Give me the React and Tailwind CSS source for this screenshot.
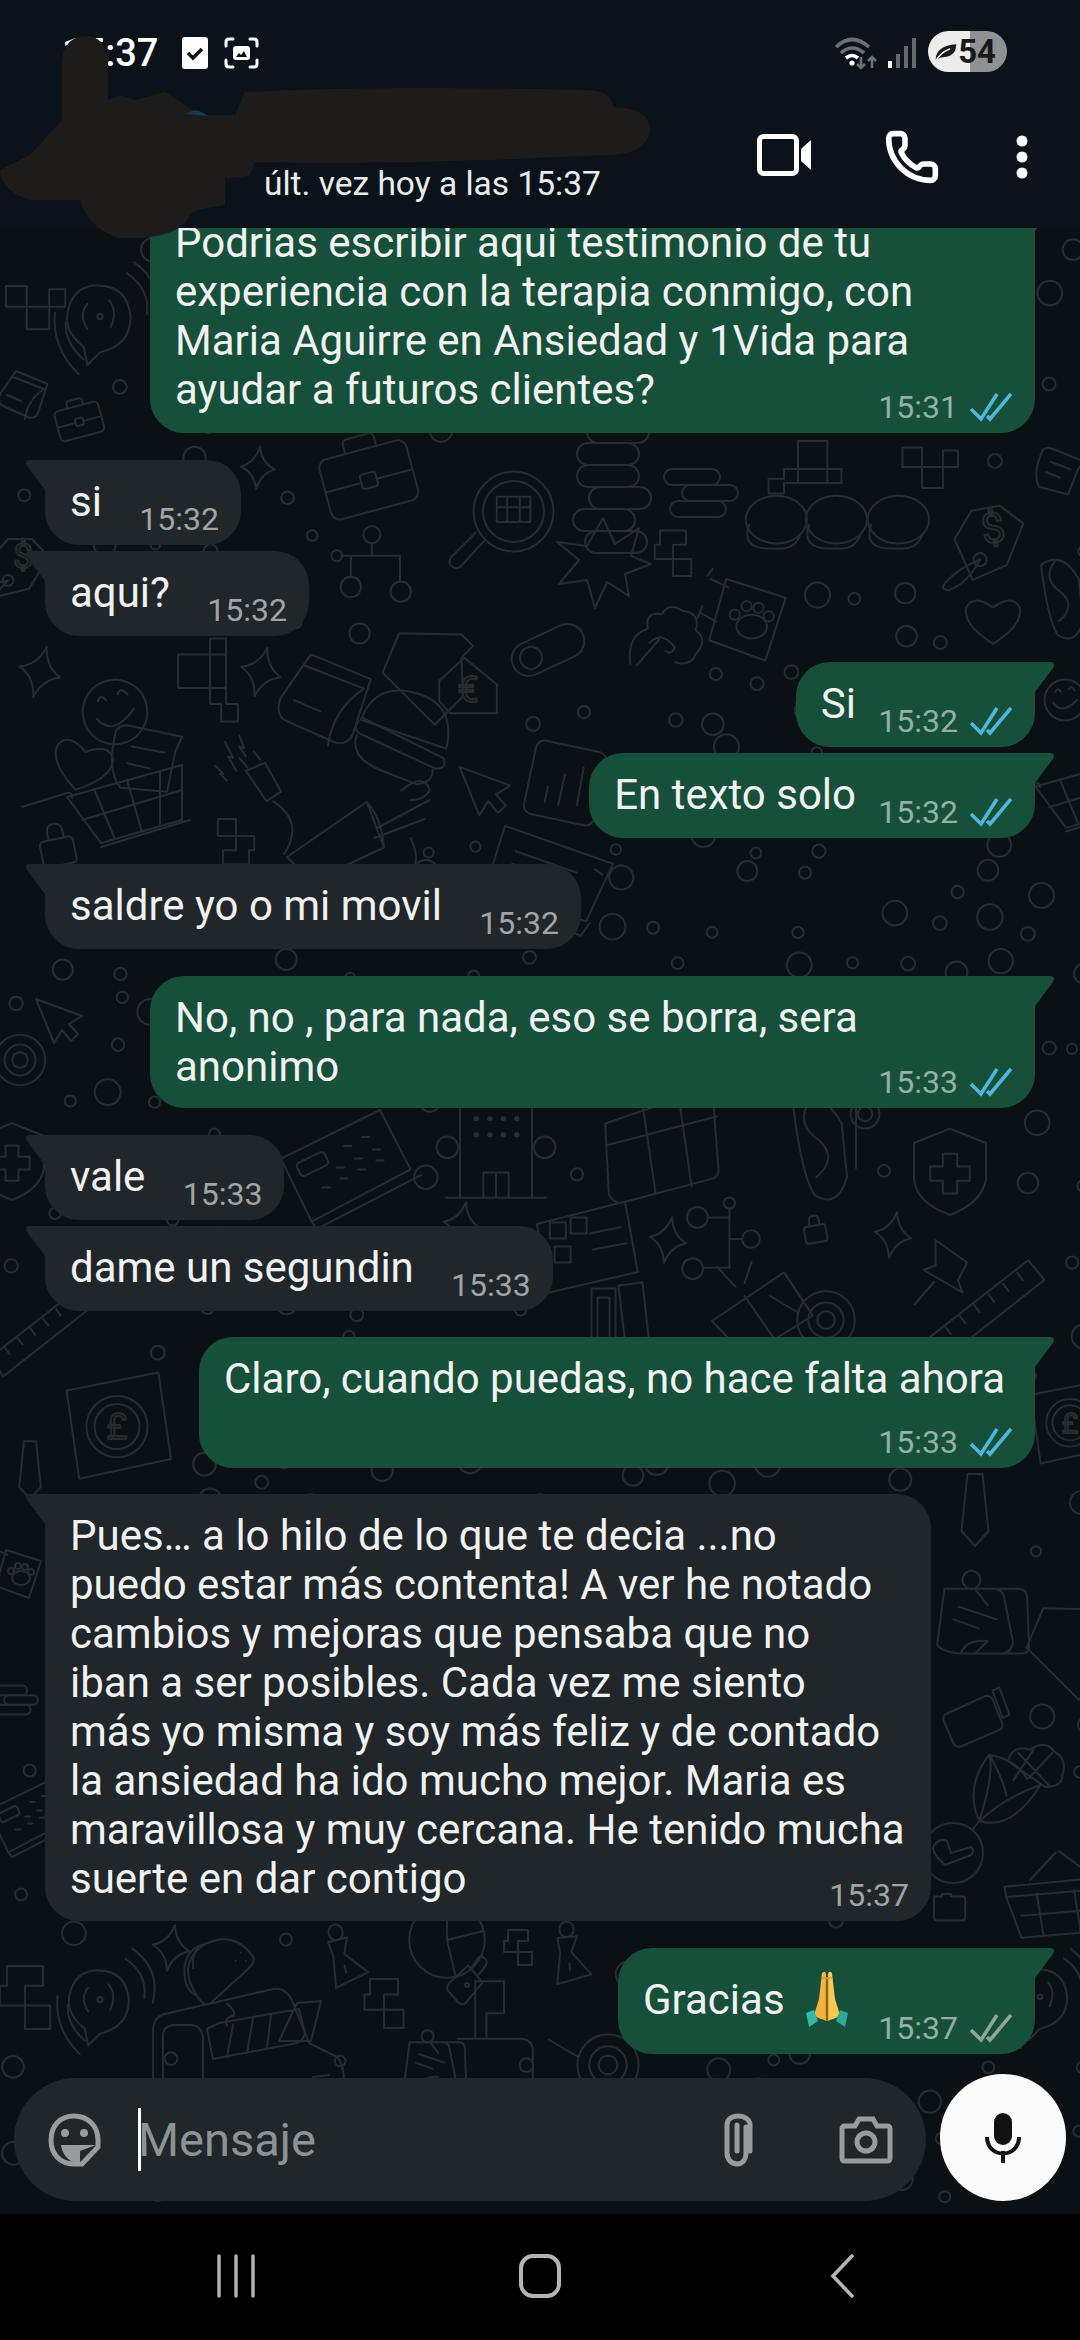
import { Phone } from 'lucide-react'

// Wallpaper doodles, each drawn around (0,0) in a box of about 100 units
const SHAPES = {
  briefcase: <><rect x="-45" y="-28" width="90" height="62" rx="9" /><path d="M-16 -28v-9q0-5 5-5h22q5 0 5 5v9M-45 4H-8M8 4H45" /><rect x="-8" y="-4" width="16" height="15" rx="3" /></>,
  star: <path d="M0-42Q7-10 34 0Q7 10 0 42Q-7 10-34 0Q-7-10 0-42Z" />,
  magnifier: <><circle cx="10" cy="-10" r="38" /><circle cx="10" cy="-10" r="29" /><path d="M-18 18L-40 42q-5 4-9 0t0-9L-26 10" /><path d="M-6-24h32v24h-32zM-6-14h32M4-24v24M16-24v24" /></>,
  circuit: <><circle cx="5" cy="-35" r="11" /><circle cx="-40" cy="-8" r="7" /><circle cx="-22" cy="32" r="13" /><circle cx="42" cy="38" r="13" /><path d="M5-24V-8h36v32M-33-8H5M-22-8V19" /></>,
  tagEuro: <><path d="M-40-10L-5-42 40-5V35H-25L-40 18Z" /><text x="0" y="20" fontSize="52" textAnchor="middle">€</text></>,
  tagDollar: <><path d="M-20-35L20-35 48-5 15 48-35 60-50 0Z" /><circle cx="-20" cy="34" r="9" /><path d="M-20 34Q-50 40-70 55Q-85 65-70 68Q-45 65-20 34" /><text x="5" y="14" fontSize="58" textAnchor="middle">$</text></>,
  pill: <><rect x="-45" y="-20" width="90" height="40" rx="20" /><circle cx="-22" cy="0" r="13" /></>,
  bag: <><path d="M-18-48L45-22 28 30Q24 48 8 45L-44 22Q-56 16-50-2L-18-48ZM-24-36L38-12M38-12Q5 10 0 48M-36 0L-8 12" /></>,
  burger: <><path d="M-44-2Q-40-42 2-42Q44-42 46 4Z" /><path d="M-46 0Q-50 10-40 12L40 26Q52 24 46 14L-42-4M-44 14Q-46 38-10 42L26 46Q42 40 38 28" /></>,
  smile: <><circle r="34" /><path d="M-20 4Q-6 26 20 0M-16-14Q-12-22-7-14M6-18Q10-26 16-16" /></>,
  heart: <path d="M0 34Q-44 6-38-18Q-28-38 0-18Q28-38 38-18Q44 6 0 34Z" />,
  receipt: <><path d="M-40-30Q-35-40-22-38L45-30 38-10 32 42-28 42Q-48 22-40-30ZM-18-12L24-8M-22 10L8 14" /></>,
  cart: <path d="M-100-5L-55-19Q-50-20-50-14M-55-15L60-47V8L-21 31ZM-21 35L68 8M-28-23L-8 25M5-32L20 20M38-40V12M-40 8L60-22" />,
  plug: <><path d="M-14-14L10-24 30 12 12 24ZM-12-18L-22-30M4-28L-4-38M20 24Q60 50 34 90" /><path d="M-40-50L-30-30-36-32-26-14M-22-58L-16-42-22-44-14-32M-52-20L-42-10-46-10-38-2" /></>,
  lock: <><rect x="-24" y="-10" width="48" height="38" rx="6" /><path d="M-10-10v-10q0-12 11-12t11 12v10" /></>,
  cursor: <path d="M-48-42L44-8 18 8 36 28 22 42 4 20-12 46Z" />,
  megaphone: <><path d="M-60 20L24-38 42 10-34 46ZM24-38Q40-20 42 10M34-10L90-40M32 0L85-20" /><path d="M60-50Q85-70 90-50Q85-40 70-40M62 42Q85 30 70 0" /></>,
  card: <><rect x="-42" y="-44" width="84" height="88" rx="10" transform="rotate(12)" /><path d="M-24 22L-20 4M-8 26L0-10M14 26L22-18" /></>,
  coins: <><rect x="-32" y="-78" width="58" height="22" rx="11" /><rect x="-26" y="-56" width="62" height="22" rx="11" /><rect x="-36" y="-34" width="62" height="22" rx="11" /><rect x="-36" y="-12" width="62" height="22" rx="11" /><rect x="-24" y="10" width="62" height="22" rx="11" /><rect x="-40" y="32" width="62" height="22" rx="11" /><rect x="-28" y="54" width="62" height="22" rx="11" /></>,
  coinsSmall: <><rect x="-36" y="-24" width="56" height="16" rx="8" /><rect x="-18" y="-8" width="56" height="16" rx="8" /><rect x="-30" y="8" width="56" height="16" rx="8" /></>,
  burst: <path d="M0-42L12-16 36-32 28-4 48 4 22 14 26 36 4 22-8 48-16 20-44 24-24 0-46-18-16-14Z" />,
  blocks: <path d="M-20-30H20V-8H0V14H-28V-8H-20ZM0 14H28V40H0Z" />,
  blocksTall: <path d="M10-52H30V-32H10ZM-30-32H10V10H-30ZM10 10H30V-32M10 10H30V30H45V52H24V30H10Z" />,
  capsule: <><ellipse cx="4" cy="-4" rx="36" ry="28" /><path d="M-28 2Q-38 30-4 30H10Q26 30 32 14" /></>,
  paw: <><path d="M-28-40L42-18 18 56-48 32ZM-26-30L-46-40M-50-44L-44-52M-40 10L-58 0M-62 6L-56-8" /><ellipse cx="2" cy="16" rx="18" ry="14" /><circle cx="-18" cy="2" r="6" /><circle cx="-4" cy="-8" r="6" /><circle cx="10" cy="-6" r="6" /><circle cx="22" cy="4" r="6" /></>,
  tree: <path d="M-46 36Q-50 0-24-8Q-28-30-6-26Q2-42 20-30Q42-28 36-6Q52 6 36 24Q30 40 10 34M-22 10Q-6-6 10 16M10 16Q4 26-2 20M-38 38L-10 6" />,
  keyboard: <><path d="M-70-16L40-70 74-4-36 54ZM-30 62L86 2M-36 54L-30 62" /><rect x="-52" y="-18" width="34" height="16" rx="4" transform="rotate(-26 -35 -10)" /><path d="M0-30h8M20-40h8M-8-6h8M12-16h8M32-26h8M-24 16h8M-4 6h8M16-4h8M36-14h8" /></>,
  building: <><path d="M-40 62V-60H40V62ZM-56 62H56M-14 62V34H14V62M0 34V62" /><circle cx="-54" cy="6" r="12" /><circle cx="54" cy="6" r="12" /><path d="M-22-44h.1M-7-44h.1M8-44h.1M23-44h.1M-22-26h.1M-7-26h.1M8-26h.1M23-26h.1M-22-8h.1M-7-8h.1M8-8h.1M23-8h.1" strokeWidth="6" /></>,
  windowCard: <path d="M-62-26L42-62Q56-64 58-52L64 26Q64 34 54 36L-44 62Q-54 62-58 52ZM-60-2L62-34M-20-44L-6 52M20-54L34 44" />,
  mouse: <><path d="M-30-50Q0-72 24-30L30 30Q20 66-6 50Q-20 30-30-50Z" /><path d="M-10-56Q-30-30 0-10Q20 10-4 30M40-60V20" /><circle cx="50" cy="-40" r="16" /><circle cx="50" cy="-40" r="8" /></>,
  shield: <><path d="M0-46L40-30V10Q36 36 0 50Q-38 36-40 10V-30Z" /><path d="M-8-18H8V-4H22V12H8V26H-8V12H-22V-4H-8Z" /></>,
  qrCard: <><path d="M-60-20L50-48 66 40-46 66ZM6-8L44-16M10 12L52 4" /><rect x="-44" y="-22" width="20" height="20" /><rect x="-18" y="-28" width="20" height="20" /><rect x="-38" y="8" width="20" height="20" /></>,
  gift: <path d="M-50 20L30-34 62 14-12 60ZM-14-8L22 44M-24-18L-44-40M-14-22L-6-46" />,
  tape: <><circle r="36" /><circle r="22" /><circle r="11" /><path d="M-36-10L-70-30" /></>,
  ruler: <path d="M-62 34L48-52 66-30-46 58ZM-44 22L-38 30M-28 10L-22 18M-12-2L-6 6M4-14L10-6M20-26L26-18M36-38L42-30" />,
  pin: <path d="M-10-40L32-10 20 14 26 30-26 0-10-6ZM-12 16L-38 46" />,
  books: <path d="M-38-42H-6V44H-38ZM-30-30H-14V34H-30ZM-2-46L30-50 40 40H8Z" />,
  poundCard: <><path d="M-56-36L46-56 60 40-42 62Z" /><circle cx="0" cy="4" r="34" /><circle cx="0" cy="4" r="25" /><text x="0" y="18" fontSize="40" textAnchor="middle">£</text></>,
  tie: <path d="M-10-48H10L18 28 0 48-18 28Z" />,
  sound: <><path d="M-10-38Q30-42 34-4Q34 28 0 36L-14 50-18 30Q-44 10-34-16Q-28-34-10-38Z" /><path d="M-14-18Q-24-6-14 10M10-22Q20-10 12 8" /><circle cx="0" cy="-4" r="3" /><path d="M30-52Q56-34 52-6M38-64Q72-40 62 0M-38 2Q-40 24-18 44M-50-8Q-54 30-24 60" /></>,
  basket: <path d="M-50-12L76-24V-8L62 40-30 48-48 0ZM-48 0L70-10M-30 22L64 14M-12-4L-4 46M32-8L40 44M-20-20L10-52M14-54L60-20" />,
  corn: <path d="M-56 50L-48 40M-48 40Q-66 0-36-38Q-20-10-16 10M-48 40Q-30-16-36-38M-48 40Q-10 52 24-2Q-14 10-48 40ZM-36-38Q-4-32 8-10M-14-30Q-10-50 12-44Q30-56 40-42Q56-34 50-14Q50 0 30 0L-14-30M-2-40L36 0M16-44L-8-8M38-40L10-10" />,
  clock: <><circle r="30" /><path d="M-20-6Q-20-2-16 4L-8 12 18 2Q22-2 18-6L-2 0-6-12Q-14-16-20-6Z" /></>,
  jar: <path d="M-26-10L22-32Q28-32 30-28L42 2Q42 6 38 8L-8 28Q-14 28-16 24L-28-4Q-28-8-26-10ZM30-38L38-42 50-10 42-6Z" />,
  note: <><path d="M-34-38H20Q30-38 32-30L42 20Q42 32 30 34H-10Q-36 34-42 24ZM24-38H48Q58-38 58-28L60 26Q60 34 50 34H30" /><path d="M-18-18L24-4M-24-4L4 6M-16 34Q-10 18 14 20Q4 30 0 34" /><circle cx="-4" cy="-48" r="10" /><path d="M0-38L14-20" /></>,
  taco: <><path d="M-30 26Q-54-12-20-34Q14-50 36-20Q40-14 32-6L-14 36Q-22 40-30 26Z" /><path d="M-20-34Q-40-30-44-8Q-46 20-30 26M-28-30Q-36-20-34-6M22-24h.1M28-14h.1M16-14h.1" /><path d="M6 36Q16 44 14 50Q2 52 6 62" /></>,
  truck: <path d="M-100 60V-12Q-100-28-84-30L20-54Q34-56 40-40L56 0 84 14Q94 24 90 60M-90 60V-8Q-90-16-80-18H-62Q-52-18-50-6V60M-46-14L-34-20 46-34 52-10Q50-2 44 0L-40 16ZM-20-18L-26 14M0-24L-6 10M18-28L14 4M44-40L68-42 58-2 26-2ZM60 34L76 32M60 46L76 44" />,
  pie: <><circle r="42" /><path d="M0-42V0L40-10M0 0L10 42" /></>,
  perfume: <><rect x="-10" y="-52" width="20" height="22" rx="10" /><path d="M-14-30H14L4-8 30 26-20 36-12-8ZM0 8V18" /></>,
  dropper: <><path d="M-18-6L8-30 30-4 4 28Q-2 32-8 26L-24 8Q-26 0-18-6ZM14-28L24-42Q30-46 36-38Q38-32 32-26L24-16" /><circle cx="6" cy="0" r="3" /></>,
  flag: <path d="M-26 36V-36H10V4H-12V36M-48 36H30Q46 36 46 52V90" />,
  folder: <path d="M-40-34H-20V-40H2V-34H30Q38-34 38-26V18Q38 26 30 26H-30Q-40 26-40 18Z" />,
  laptop: <path d="M-50-60L70-18 40 46-72 10ZM-72 22L-68 10M-72 22L34 62 44 48M50-12L58-6M-38-32L30-8M-42-18L24 6" />,
  house: <path d="M-50 0L0-48H18V-30L50 0V44H-32Z" />,
  squares: <path d="M-30-30H-4V-4H-30ZM-4-4H24V24H-4ZM24-26H44V-4H24Z" />,
}

const DOODLES = [
  ['briefcase', 79, 420, 0.5, -15], ['star', 258, 468, 0.5, 5], ['briefcase', 368, 477, 1, -15], ['magnifier', 503, 522, 1.05, 0],
  ['circuit', 368, 562, 0.78, 0], ['house', 431, 665, 0.9, 45], ['pill', 548, 650, 0.85, -25], ['star', 40, 672, 0.62, 15], ['blocksTall', 202, 680, 0.8, 0],
  ['star', 261, 672, 0.6, 15], ['bag', 328, 700, 0.95, 0], ['burger', 403, 733, 1, 15], ['tagEuro', 468, 688, 0.72, 0], ['smile', 115, 712, 0.95, -10],
  ['heart', 82, 765, 0.75, 15], ['receipt', 145, 757, 0.78, 5], ['cart', 122, 812, 1, 0], ['plug', 257, 782, 0.8, 0], ['lock', 57, 846, 0.7, -12],
  ['cursor', 486, 790, 0.55, 0], ['megaphone', 344, 838, 0.95, 0], ['card', 565, 783, 0.85, 0], ['blocks', 236, 845, 0.65, 180], ['laptop', 550, 880, 0.9, 0],
  ['coins', 613, 477, 1, 0], ['coinsSmall', 700, 493, 1, 0], ['burst', 603, 560, 1, 0], ['blocks', 673, 550, 0.65, 0], ['blocksTall', 805, 462, 0.7, 90], ['squares', 925, 470, 0.75, 0],
  ['capsule', 773, 523, 0.85, 0], ['capsule', 833, 523, 0.85, 0], ['capsule', 895, 523, 0.85, 0], ['tagDollar', 990, 533, 0.72, -10],
  ['paw', 750, 613, 0.85, 0], ['tree', 667, 635, 0.8, 0], ['heart', 993, 620, 0.7, 0], ['mouse', 1062, 600, 0.7, 0], ['smile', 1065, 700, 0.6, 0],
  ['cart', 1085, 800, 0.9, 0], ['receipt', 1058, 470, 0.5, 15],
  ['keyboard', 344, 1173, 0.9, 0], ['building', 496, 1142, 0.9, 0], ['windowCard', 661, 1147, 0.9, 0], ['mouse', 820, 1150, 0.9, 0], ['shield', 950, 1170, 0.9, 0],
  ['qrCard', 585, 1240, 0.8, 0], ['circuit', 723, 1235, 0.8, 90], ['gift', 757, 1303, 0.9, 0], ['tape', 826, 1320, 0.8, 0], ['ruler', 985, 1307, 0.9, 0],
  ['pin', 943, 1270, 0.75, 0], ['books', 620, 1320, 0.75, 0], ['poundCard', 117, 1423, 0.9, 0], ['star', 462, 1225, 0.55, 10], ['star', 668, 1240, 0.55, 10],
  ['star', 893, 1235, 0.55, 10], ['lock', 815, 1230, 0.45, -10], ['tie', 30, 1470, 0.6, 0], ['shield', 12, 1160, 0.8, 0], ['ruler', 40, 1330, 0.8, 0], ['cursor', 60, 1020, 0.5, 0],
  ['tie', 975, 1510, 0.75, 0], ['note', 975, 1623, 0.9, 0], ['jar', 967, 1723, 0.85, 0], ['corn', 1020, 1787, 0.85, 0], ['clock', 953, 1853, 1, 0],
  ['basket', 1047, 1897, 0.85, 0], ['folder', 950, 1910, 0.4, 0], ['sound', 1040, 2000, 0.8, 0], ['poundCard', 1070, 1420, 0.7, 0], ['house', 1075, 1640, 0.9, 45],
  ['blocks', 25, 1993, 0.9, 0], ['star', 171, 1948, 0.55, 10], ['taco', 222, 1973, 0.85, 0], ['sound', 100, 2003, 0.85, 0], ['truck', 253, 2043, 1, 0], ['perfume', 343, 1960, 0.7, -15],
  ['pie', 447, 1940, 0.9, 0], ['blocks', 384, 2000, 0.7, 0], ['dropper', 463, 1985, 0.65, 0], ['blocks', 518, 1945, 0.5, 0], ['perfume', 569, 1958, 0.7, -5],
  ['flag', 496, 2010, 0.8, 0], ['note', 430, 2065, 0.6, 0], ['tape', 608, 2065, 0.85, 0], ['sound', 100, 320, 0.9, 0], ['squares', 30, 310, 0.8, 0],
  ['bag', 25, 395, 0.5, 0], ['tagDollar', 20, 560, 0.6, 0], ['tape', 20, 1060, 0.7, 0], ['keyboard', 30, 1820, 0.6, 0], ['coinsSmall', 15, 1700, 0.6, 0], ['paw', 20, 1570, 0.5, 0],
]

// Little rings scattered over the gaps, on a jittered grid so they stay the same every render
function scatterRings() {
  const rings = []
  let seed = 7
  const rand = () => {
    seed = (seed * 16807) % 2147483647
    return seed / 2147483647
  }
  for (let y = 240; y < 2210; y += 42) {
    for (let x = 8; x < 1080; x += 46) {
      const cx = x + rand() * 30
      const cy = y + rand() * 26
      const r = rand() < 0.6 ? 5 + rand() * 2 : 10 + rand() * 3
      const clear = DOODLES.every(([, dx, dy, s]) => Math.hypot(dx - cx, dy - cy) > 58 * s + r + 6)
      if (clear && rand() < 0.55) rings.push({ cx, cy, r })
    }
  }
  return rings
}

const RINGS = scatterRings()

function Wallpaper() {
  return (
    <svg className="absolute left-0 top-0" width="1080" height="2214" viewBox="0 0 1080 2214" fill="none" stroke="#262c2f" strokeWidth="2" strokeLinejoin="round" strokeLinecap="round">
      {DOODLES.map(([name, x, y, s, r], i) => (
        <g key={i} transform={`translate(${x} ${y}) rotate(${r}) scale(${s})`} strokeWidth={2 / s} fontFamily="Roboto, sans-serif">
          {SHAPES[name]}
        </g>
      ))}
      {RINGS.map((c, i) => <circle key={i} cx={c.cx} cy={c.cy} r={c.r} />)}
    </svg>
  )
}

function Ticks({ color }) {
  return (
    <svg width="42" height="30" viewBox="0 0 42 30" fill="none" stroke={color} strokeWidth="3.6" className="block">
      <path d="M1 17l10 10L27 2" />
      <path d="M17 24l3 3L41 2" />
    </svg>
  )
}

function PrayingHands() {
  return (
    <svg width="44" height="56" viewBox="0 0 44 56" className="inline-block ml-[20px] align-[-13px]">
      <path d="M21 50C18 48 13 48 9 44L14 28L17 2Q20-1 21 3Z" fill="#f3b33d" />
      <path d="M23 50C26 48 31 48 35 44L30 28L27 2Q24-1 23 3Z" fill="#fbc94e" />
      <path d="M21 6V50M23 6V50" stroke="#d98a22" strokeWidth="1" />
      <path d="M17 7H27" stroke="#e9903a" strokeWidth="1.5" />
      <path d="M1 42L9 39L13 50L4 56Z" fill="#35b8a8" />
      <path d="M43 42L35 39L31 50L40 56Z" fill="#2fa89a" />
    </svg>
  )
}

// One chat bubble; the time sits in the corner and a spacer keeps the text clear of it
function Bubble({ out = false, text, children, time, ticks, className = '' }) {
  return (
    <div
      className={`relative shrink-0 rounded-[34px] text-[42px] leading-[49px] text-[#f0f2f2] ${
        out
          ? 'self-end mr-[45px] bg-[#164f3a] rounded-tr-none pl-[25px] pr-[23px]'
          : 'self-start ml-[45px] bg-[#202629] rounded-tl-none pl-[25px] pr-[22px]'
      } ${className}`}
    >
      {out ? (
        <svg className="absolute left-full top-0" width="20" height="30" viewBox="0 0 20 30">
          <path d="M0 0H15Q21 0 18 6L0 30Z" fill="#164f3a" />
        </svg>
      ) : (
        <svg className="absolute right-full top-0" width="20" height="30" viewBox="0 0 20 30">
          <path d="M20 0H5Q-1 0 2 6L20 30Z" fill="#202629" />
        </svg>
      )}
      {text}
      {children}
      <span className={`inline-block h-0 ${out ? 'w-[156px]' : 'w-[117px]'}`} />
      <span className={`absolute bottom-[10px] flex items-center gap-[12px] text-[32px] leading-none ${out ? 'right-[23px] text-[#93b0a4]' : 'right-[22px] text-[#a0a4a6]'}`}>
        {time}
        {ticks && <Ticks color={ticks} />}
      </span>
    </div>
  )
}

const BLUE = '#4fb6dc'

function StatusBar() {
  return (
    <div className="flex items-start justify-between h-[92px] pl-[62px] pr-[73px] pt-[31px]">
      <div className="flex items-center">
        <span className="text-[38px] leading-[44px] font-medium text-white">15:37</span>
        <svg width="26" height="32" viewBox="0 0 26 32" className="ml-[24px]">
          <rect width="26" height="32" rx="3" fill="#fff" />
          <path d="M6 16l5 5 9-9" fill="none" stroke="#0b1219" strokeWidth="3.4" />
        </svg>
        <svg width="35" height="32" viewBox="0 0 35 32" fill="none" stroke="#fff" strokeWidth="3" className="ml-[16px]">
          <path d="M2 9V5Q2 2 5 2H9M26 2H30Q33 2 33 5V9M33 23V27Q33 30 30 30H26M9 30H5Q2 30 2 27V23" strokeLinecap="round" />
          <rect x="9" y="9" width="17" height="14" rx="3" fill="#fff" stroke="none" />
          <path d="M12 20l3-4 2 2 3-4 3 6Z" fill="#0b1219" stroke="none" />
        </svg>
      </div>
      <div className="flex items-center gap-[9px]">
        <svg width="44" height="34" viewBox="0 0 44 34" fill="none" stroke="#6e7173" strokeWidth="3.6" className="mt-[2px]">
          <path d="M2 11Q18-4 35 11M7 17Q18 7 30 17" />
          <path d="M12 22Q18 17 24 22" stroke="#fff" />
          <circle cx="18" cy="27" r="2.6" fill="#fff" stroke="none" />
          <path d="M27 21V32M23 28l4 4 4-4" strokeWidth="2.6" />
          <path d="M38 32V21M34 25l4-4 4 4" strokeWidth="2.6" />
        </svg>
        <svg width="30" height="30" viewBox="0 0 30 30" className="mr-[2px] mt-[2px]">
          <rect x="1" y="23" width="4" height="7" fill="#fff" />
          <rect x="9" y="16" width="4" height="14" fill="#66696b" />
          <rect x="17" y="8" width="4" height="22" fill="#66696b" />
          <rect x="25" y="0" width="4" height="30" fill="#66696b" />
        </svg>
        <div className="relative flex items-center justify-end w-[79px] h-[41px] rounded-full overflow-hidden bg-[linear-gradient(90deg,#ececec_53%,#8f9193_53%)] pr-[11px]">
          <svg className="absolute left-[5px] top-[11px]" width="25" height="20" viewBox="0 0 28 26" preserveAspectRatio="none">
            <path d="M3 22Q4 5 26 3Q26 20 9 20Q7 20 3 24Z" fill="#17191b" />
            <path d="M3 25Q8 14 19 9" stroke="#ececec" strokeWidth="2" fill="none" />
          </svg>
          <span className="text-[33px] font-bold leading-none text-[#17191b]">54</span>
        </div>
      </div>
    </div>
  )
}

function Header() {
  return (
    <div className="relative z-10 h-[228px] bg-[#0b1219]">
      <StatusBar />
      <div className="flex items-start justify-between h-[136px] pl-[264px] pr-[52px]">
        <span className="mt-[73px] text-[33.5px] leading-[38px] text-[#e9ecec]">últ. vez hoy a las 15:37</span>
        <div className="flex items-center gap-[73px] mt-[37px]">
          <svg width="54" height="42" viewBox="0 0 54 42" fill="#fff" className="-mt-[4px]">
            <rect x="2.5" y="2.5" width="37" height="37" rx="4" fill="none" stroke="#fff" strokeWidth="5" />
            <path d="M44 15L54 6V36L44 27Z" />
          </svg>
          <Phone size={56} color="#fff" strokeWidth={2.4} className="mr-[3px]" />
          <svg width="12" height="44" viewBox="0 0 12 44" fill="#fff">
            <circle cx="6" cy="6" r="5.5" />
            <circle cx="6" cy="22" r="5.5" />
            <circle cx="6" cy="38" r="5.5" />
          </svg>
        </div>
      </div>
    </div>
  )
}

function Composer() {
  return (
    <div className="flex items-center justify-between mt-[20px] pl-[14px] pr-[14px] pb-[13px]">
      <div className="flex items-center h-[123px] w-[912px] mt-[4px] rounded-full bg-[#202629] pl-[34px] pr-[33px]">
        <svg width="53" height="54" viewBox="0 0 53 54" fill="none" stroke="#989c9e" strokeWidth="5">
          <path d="M26 3C40 3 50 13 50 27V34L34 51H26C12 51 3 41 3 27C3 13 12 3 26 3Z" />
          <circle cx="17" cy="20" r="4" fill="#989c9e" stroke="none" />
          <circle cx="36" cy="20" r="4" fill="#989c9e" stroke="none" />
          <path d="M13 32H48L32 38V51C22 50 14 42 13 32Z" fill="#989c9e" stroke="none" />
        </svg>
        <div className="w-[3px] h-[63px] ml-[37px] bg-white" />
        <span className="flex-1 -ml-[3px] text-[47px] leading-none text-[#8d9294]">Mensaje</span>
        <svg width="34" height="54" viewBox="0 0 34 54" fill="none" stroke="#989c9e" strokeWidth="5" strokeLinecap="round" className="mr-[84px]">
          <path d="M25 14V40C25 46 22 51 16 51C10 51 6 46 6 40V12C6 6 11 3 17 3C24 3 29 7 29 12V38M16 12V38" />
        </svg>
        <svg width="54" height="48" viewBox="0 0 54 48" fill="none" stroke="#989c9e" strokeWidth="5">
          <path d="M3 13Q3 10 6 10H16L20 3H34L38 10H48Q51 10 51 13V42Q51 45 48 45H6Q3 45 3 42Z" />
          <circle cx="27" cy="26" r="9" />
        </svg>
      </div>
      <div className="flex items-center justify-center w-[126px] h-[127px] rounded-full bg-[#fbfbfb]">
        <svg width="36" height="50" viewBox="0 0 36 50">
          <rect x="9" y="0" width="18" height="32" rx="9" fill="#111" />
          <path d="M2 24C2 46 34 46 34 24" fill="none" stroke="#111" strokeWidth="4" />
          <rect x="16" y="38" width="4" height="12" fill="#111" />
        </svg>
      </div>
    </div>
  )
}

function NavBar() {
  return (
    <div className="flex items-start justify-between h-[126px] bg-black pl-[216px] pr-[226px] pt-[40px]">
      <svg width="40" height="44" viewBox="0 0 40 44" stroke="#b4b4b4" strokeWidth="3.4" strokeLinecap="round">
        <path d="M3 2V42M20 2V42M37 2V42" />
      </svg>
      <svg width="44" height="44" viewBox="0 0 44 44" fill="none" stroke="#b4b4b4" strokeWidth="4" className="-ml-[6px]">
        <rect x="3" y="2" width="38" height="40" rx="12" />
      </svg>
      <svg width="24" height="44" viewBox="0 0 24 44" fill="none" stroke="#b4b4b4" strokeWidth="3.6" strokeLinecap="round">
        <path d="M22 2L3 22L22 42" />
      </svg>
    </div>
  )
}

export default function App() {
  return (
    <div className="relative flex flex-col w-[1080px] h-[2340px] overflow-hidden bg-[#0b1014] font-['Roboto',sans-serif]">
      <Wallpaper />
      <Header />
      <div className="relative flex-1 flex flex-col justify-end min-h-0 overflow-hidden">
        <Bubble out className="w-[885px] pt-[17px] pb-[19px]" text={<>Podrias escribir aqui testimonio de tu<br />experiencia con la terapia conmigo, con<br />Maria Aguirre en Ansiedad y 1Vida para<br />ayudar a futuros clientes?</>} time="15:31" ticks={BLUE} />
        <Bubble className="mt-[27px] pt-[17px] pb-[19px]" text="si" time="15:32" />
        <Bubble className="mt-[6px] pt-[17px] pb-[19px]" text="aqui?" time="15:32" />
        <Bubble out className="mt-[26px] pt-[17px] pb-[19px]" text="Si" time="15:32" ticks={BLUE} />
        <Bubble out className="mt-[6px] pt-[17px] pb-[19px]" text="En texto solo" time="15:32" ticks={BLUE} />
        <Bubble className="mt-[26px] pt-[17px] pb-[19px]" text="saldre yo o mi movil" time="15:32" />
        <Bubble out className="mt-[27px] w-[885px] pt-[17px] pb-[17px]" text={<>No, no , para nada, eso se borra, sera<br />anonimo</>} time="15:33" ticks={BLUE} />
        <Bubble className="mt-[27px] pt-[17px] pb-[19px]" text="vale" time="15:33" />
        <Bubble className="mt-[6px] pt-[17px] pb-[19px]" text="dame un segundin" time="15:33" />
        <Bubble out className="mt-[26px] w-[836px] pt-[17px] pb-[16px]" text="Claro, cuando puedas, no hace falta ahora" time="15:33" ticks={BLUE} />
        <Bubble className="mt-[26px] w-[886px] pt-[17px] pb-[18px]" text={<>Pues… a lo hilo de lo que te decia ...no<br />puedo estar más contenta! A ver he notado<br />cambios y mejoras que pensaba que no<br />iban a ser posibles. Cada vez me siento<br />más yo misma y soy más feliz y de contado<br />la ansiedad ha ido mucho mejor. Maria es<br />maravillosa y muy cercana. He tenido mucha<br />suerte en dar contigo</>} time="15:37" />
        <Bubble out className="mt-[27px] w-[417px] pt-[23px] pb-[27px]" text="Gracias" time="15:37" ticks="#8fa79b">
          <PrayingHands />
        </Bubble>
        <Composer />
      </div>
      <NavBar />
      {/* marker scribble hiding the contact name and picture */}
      <svg className="absolute left-0 top-0 z-20" width="660" height="245" viewBox="0 0 660 245">
        <path d="M86 36Q105 36 108 60L108 100L120 95L135 100L165 92L185 105L200 115L235 115L245 92Q380 85 590 90Q612 92 613 107Q650 108 650 130Q648 153 610 155Q400 165 255 162L250 175Q240 178 225 178L225 205Q190 210 190 215Q180 240 120 238Q90 230 80 200L30 200Q0 190 0 170L30 155L62 120L62 60Q65 36 86 36Z" fill="#1d1c1b" />
        <path d="M186 114Q196 106 208 116Z" fill="#123a50" />
      </svg>
    </div>
  )
}
